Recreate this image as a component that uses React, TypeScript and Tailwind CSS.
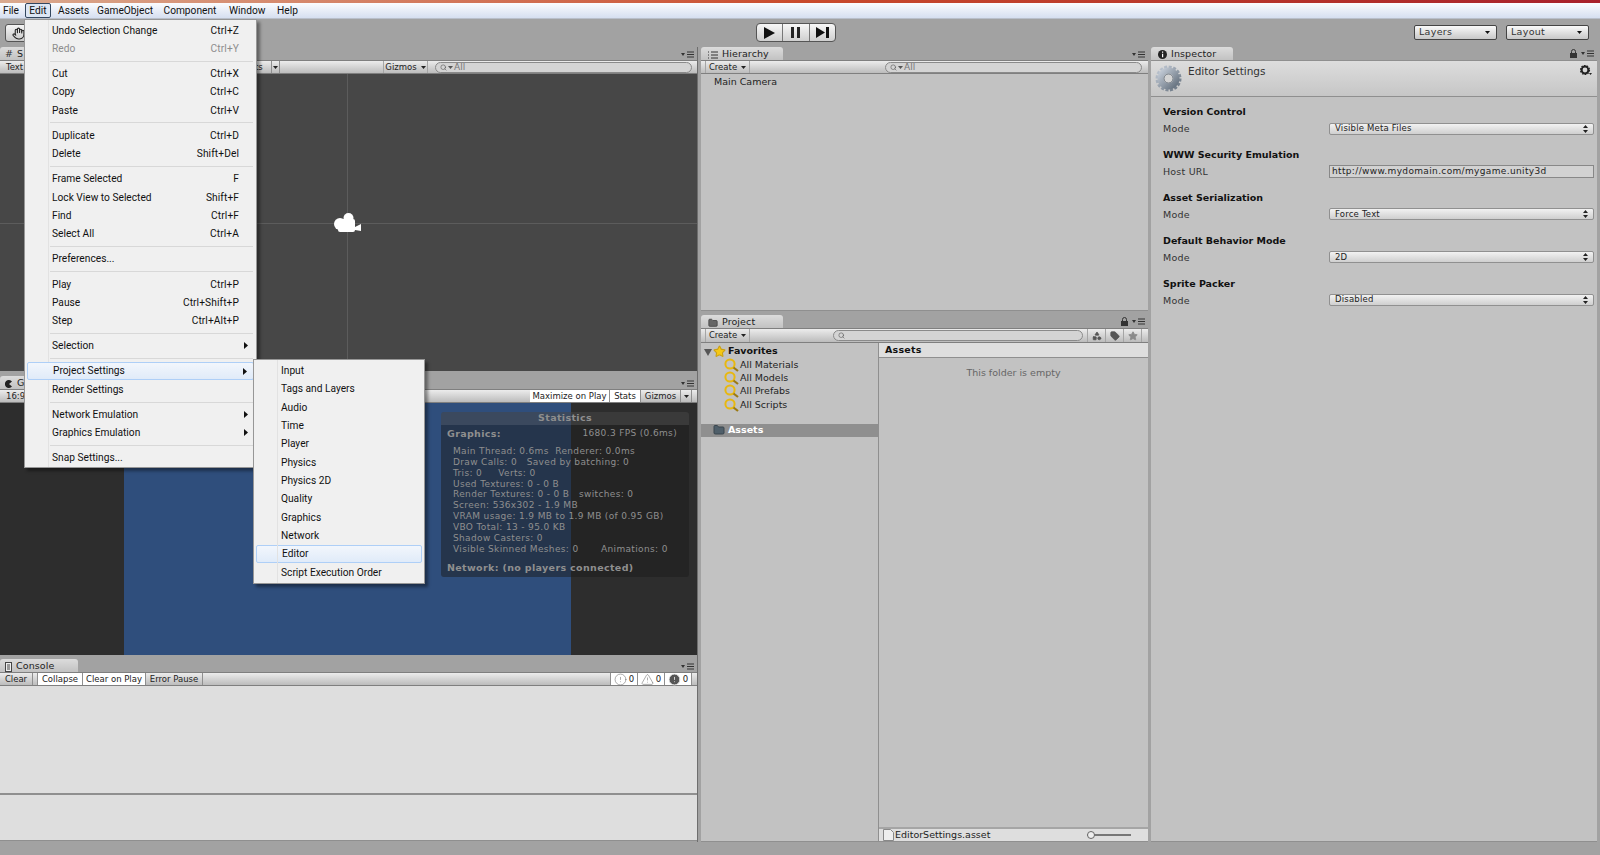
import { Hand, Search, Star, Tag, Folder, Shapes, TriangleAlert, CircleAlert } from "lucide-react";

const unity = "font-['DejaVu_Sans',sans-serif]";
const win = "font-['Roboto',sans-serif]";

const mainMenu: (null | { label: string; key?: string; sub?: boolean; off?: boolean; hot?: boolean })[] = [
  { label: "Undo Selection Change", key: "Ctrl+Z" },
  { label: "Redo", key: "Ctrl+Y", off: true },
  null,
  { label: "Cut", key: "Ctrl+X" },
  { label: "Copy", key: "Ctrl+C" },
  { label: "Paste", key: "Ctrl+V" },
  null,
  { label: "Duplicate", key: "Ctrl+D" },
  { label: "Delete", key: "Shift+Del" },
  null,
  { label: "Frame Selected", key: "F" },
  { label: "Lock View to Selected", key: "Shift+F" },
  { label: "Find", key: "Ctrl+F" },
  { label: "Select All", key: "Ctrl+A" },
  null,
  { label: "Preferences..." },
  null,
  { label: "Play", key: "Ctrl+P" },
  { label: "Pause", key: "Ctrl+Shift+P" },
  { label: "Step", key: "Ctrl+Alt+P" },
  null,
  { label: "Selection", sub: true },
  null,
  { label: "Project Settings", sub: true, hot: true },
  { label: "Render Settings" },
  null,
  { label: "Network Emulation", sub: true },
  { label: "Graphics Emulation", sub: true },
  null,
  { label: "Snap Settings..." },
];

const subMenu = ["Input", "Tags and Layers", "Audio", "Time", "Player", "Physics", "Physics 2D", "Quality", "Graphics", "Network", "Editor", "Script Execution Order"];

const settings = [
  { title: "Version Control", label: "Mode", value: "Visible Meta Files" },
  { title: "WWW Security Emulation", label: "Host URL", value: "http://www.mydomain.com/mygame.unity3d", input: true },
  { title: "Asset Serialization", label: "Mode", value: "Force Text" },
  { title: "Default Behavior Mode", label: "Mode", value: "2D" },
  { title: "Sprite Packer", label: "Mode", value: "Disabled" },
];

const stats = [
  "Main Thread: 0.6ms  Renderer: 0.0ms",
  "Draw Calls: 0   Saved by batching: 0",
  "Tris: 0     Verts: 0",
  "Used Textures: 0 - 0 B",
  "Render Textures: 0 - 0 B   switches: 0",
  "Screen: 536x302 - 1.9 MB",
  "VRAM usage: 1.9 MB to 1.9 MB (of 0.95 GB)",
  "VBO Total: 13 - 95.0 KB",
  "Shadow Casters: 0",
  "Visible Skinned Meshes: 0       Animations: 0",
];

const PanelMenu = () => (
  <svg width="13" height="7" viewBox="0 0 13 7" className="shrink-0">
    <path d="M0 2h4L2 5z" fill="#333" />
    <path d="M6 1h7M6 3.5h7M6 6h7" stroke="#333" strokeWidth="1" />
  </svg>
);

const LockIcon = () => (
  <svg width="7" height="9" viewBox="0 0 7 9" className="shrink-0">
    <path d="M1.5 4V2.5a2 2 0 0 1 4 0V4" fill="none" stroke="#333" />
    <rect x="0" y="4" width="7" height="5" fill="#333" />
  </svg>
);

const Caret = ({ color = "#222" }: { color?: string }) => (
  <svg width="5" height="3" viewBox="0 0 5 3" className="shrink-0">
    <path d="M0 0h5L2.5 3z" fill={color} />
  </svg>
);

const Arrow = () => (
  <svg width="4" height="7" viewBox="0 0 4 7" className="shrink-0">
    <path d="M0 0l4 3.5L0 7z" fill="#111" />
  </svg>
);

const Updown = () => (
  <svg width="5" height="8" viewBox="0 0 5 8" className="shrink-0">
    <path d="M2.5 0L5 3H0zM2.5 8L0 5h5z" fill="#222" />
  </svg>
);

const Magnifier = () => (
  <svg width="15" height="14" viewBox="0 0 15 14" className="shrink-0">
    <circle cx="6" cy="6" r="4.6" fill="none" stroke="#e8b810" strokeWidth="2" />
    <path d="M9.5 9.5L14 13" stroke="#9c7a12" strokeWidth="2.2" />
  </svg>
);

const Gear = () => (
  <svg width="27" height="27" viewBox="0 0 27 27" className="shrink-0">
    <defs>
      <linearGradient id="gear" x1="0" y1="0" x2="1" y2="1">
        <stop offset="0" stopColor="#c3cbd6" />
        <stop offset="1" stopColor="#66727f" />
      </linearGradient>
    </defs>
    <circle cx="13.5" cy="13.5" r="11.5" fill="none" stroke="url(#gear)" strokeWidth="3" strokeDasharray="3 1.5" />
    <circle cx="13.5" cy="13.5" r="8" fill="none" stroke="url(#gear)" strokeWidth="6" />
    <circle cx="13.5" cy="13.5" r="4.5" fill="#d4d4d4" stroke="#5e6873" strokeWidth="0.8" />
  </svg>
);

const SmallGear = () => (
  <svg width="12" height="11" viewBox="0 0 12 11" className="shrink-0">
    <circle cx="5" cy="5" r="3.4" fill="none" stroke="#222" strokeWidth="2" />
    <circle cx="5" cy="5" r="4.5" fill="none" stroke="#222" strokeWidth="1.2" strokeDasharray="1.6 1.2" />
    <path d="M9 8h3l-1.5 2z" fill="#222" />
  </svg>
);

const TabStrip = ({ children, h, left, menu, lock }: { children: React.ReactNode; h: string; left: string; menu?: boolean; lock?: boolean }) => (
  <div className={`${h} flex items-end justify-between shrink-0`}>
    <div className={`${left} h-[13px] pt-[2px] flex items-center gap-1 rounded-t-[3px] bg-gradient-to-b from-[#dcdcdc] to-[#c2c2c2] text-[9.5px] tracking-[0.1px] text-[#222] ${unity}`}>
      {children}
    </div>
    {menu && (
      <div className="flex items-center gap-[4px] pr-[3px] pb-[2px]">
        {lock && <LockIcon />}
        <PanelMenu />
      </div>
    )}
  </div>
);

const Bar = ({ children, h = "h-[14px]" }: { children: React.ReactNode; h?: string }) => (
  <div className={`${h} shrink-0 flex items-stretch whitespace-nowrap border-y border-[#7f7f7f] bg-gradient-to-b from-[#ececec] to-[#bcbcbc] text-[8.5px] text-[#222] ${unity}`}>
    {children}
  </div>
);

const SearchPill = ({ className, all = true }: { className: string; all?: boolean }) => (
  <div className={`${className} h-[11px] self-center flex items-center gap-px pl-1 rounded-full border border-[#8a8a8a] bg-[#d4d4d4] text-[9px] text-[#777]`}>
    <Search size={7} stroke="#555" />
    {all && <Caret color="#555" />}
    {all && <span className="leading-none">All</span>}
  </div>
);

const SceneView = () => (
  <div className="h-[297px] shrink-0 relative bg-[#474747] overflow-hidden">
    <div className="absolute left-[347px] top-0 bottom-0 w-px bg-[#5c5c5c]" />
    <div className="absolute left-0 right-0 top-[149px] h-px bg-[#5c5c5c]" />
    <svg width="28" height="20" viewBox="0 0 28 20" className="absolute left-[334px] top-[139px]">
      <circle cx="6" cy="11" r="6" fill="#fff" />
      <circle cx="14.5" cy="5" r="5" fill="#fff" />
      <rect x="4" y="6" width="17" height="13" rx="2" fill="#fff" />
      <path d="M21 14l6-3v7l-6-1z" fill="#fff" />
    </svg>
  </div>
);

const GameView = () => (
  <div className="h-[252px] shrink-0 relative flex bg-[#2d2d2d] overflow-hidden">
    <div className="w-[124px] shrink-0" />
    <div className="w-[447px] shrink-0 bg-[#2f4e7c]" />
    <div className={`absolute left-[441px] top-[9px] w-[248px] h-[165px] rounded-[3px] bg-[#1c1c1c]/50 text-[#8f8f8f] text-[9px] tracking-[0.35px] ${unity}`}>
      <div className="h-[13px] flex items-center justify-center rounded-t-[3px] bg-white/10 font-bold text-[#8e8e8e] text-[9.5px]">Statistics</div>
      <div className="flex justify-between pl-[6px] pr-[12px] mt-[3px] leading-[11px]">
        <span className="font-bold text-[9.5px]">Graphics:</span>
        <span>1680.3 FPS (0.6ms)</span>
      </div>
      <div className="pl-[12px] mt-[7px] whitespace-pre">
        {stats.map((line) => (
          <div key={line} className="h-[10.85px] leading-[11px]">{line}</div>
        ))}
      </div>
      <div className="pl-[6px] mt-[8px] font-bold text-[9.5px] leading-[11px]">Network: (no players connected)</div>
    </div>
  </div>
);

const ToolButton = ({ label, className, white }: { label: string; className: string; white?: boolean }) => (
  <div className={`${className} flex items-center justify-center border-r border-[#8f8f8f] ${white ? "bg-white" : ""}`}>{label}</div>
);

const LeftColumn = () => (
  <div className="w-[698px] shrink-0 flex flex-col border-r border-[#6e6e6e]">
    <TabStrip h="h-[13px]" left="w-[30px] pl-[5px]" menu>
      <span className="text-[#333]">#</span>
      <span>S</span>
    </TabStrip>
    <Bar>
      <div className="w-[30px] pl-[6px] flex items-center">Text</div>
      <div className="w-[225px]" />
      <div className="w-[17px] flex items-center border-r border-[#8f8f8f]">ts</div>
      <div className="w-[8px] flex items-center justify-center border-r border-[#8f8f8f]"><Caret /></div>
      <div className="w-[103px]" />
      <div className="w-[45px] flex items-center justify-center gap-1 border-x border-[#a5a5a5]">Gizmos <Caret /></div>
      <div className="w-[7px]" />
      <SearchPill className="w-[257px]" />
    </Bar>
    <SceneView />
    <TabStrip h="h-[18px]" left="w-[30px] pl-[5px]" menu>
      <svg width="8" height="8" viewBox="0 0 8 8"><path d="M7 1.5A4 4 0 1 0 7 6.5L4 4z" fill="#222" /></svg>
      <span>G</span>
    </TabStrip>
    <Bar>
      <div className="pl-[6px] flex items-center">16:9</div>
      <div className="flex-1" />
      <ToolButton label="Maximize on Play" className="w-[80px]" white />
      <ToolButton label="Stats" className="w-[31px]" white />
      <ToolButton label="Gizmos" className="w-[40px]" />
      <div className="w-[11px] flex items-center justify-center border-r border-[#8f8f8f]"><Caret /></div>
      <div className="w-[5px]" />
    </Bar>
    <GameView />
    <TabStrip h="h-[17px]" left="w-[78px] pl-[5px]" menu>
      <svg width="7" height="10" viewBox="0 0 7 10"><rect x=".5" y=".5" width="6" height="9" fill="#eee" stroke="#444" /><path d="M2 3h3M2 5h3M2 7h3" stroke="#444" /></svg>
      <span>Console</span>
    </TabStrip>
    <Bar>
      <ToolButton label="Clear" className="w-[33px]" />
      <div className="w-[5px] border-r border-[#8f8f8f]" />
      <ToolButton label="Collapse" className="w-[45px]" white />
      <ToolButton label="Clear on Play" className="w-[63px]" white />
      <ToolButton label="Error Pause" className="w-[57px]" />
      <div className="flex-1" />
      <div className="w-[28px] flex items-center justify-center gap-[2px] bg-white border-x border-[#8f8f8f]"><CircleAlert size={13} strokeWidth={1} stroke="#666" /> 0</div>
      <div className="w-[27px] flex items-center justify-center gap-[2px] bg-white border-r border-[#8f8f8f]"><TriangleAlert size={13} strokeWidth={1} stroke="#666" /> 0</div>
      <div className="w-[27px] flex items-center justify-center gap-[2px] bg-white border-r border-[#8f8f8f]"><CircleAlert size={13} strokeWidth={1.5} fill="#555" stroke="#eee" /> 0</div>
      <div className="w-[5px]" />
    </Bar>
    <div className="h-[109px] shrink-0 bg-[#dedede] border-b-2 border-[#8f8f8f]" />
    <div className="h-[46px] shrink-0 bg-[#dedede] border-b border-[#8f8f8f]" />
  </div>
);

const MiddleColumn = () => (
  <div className={`w-[447px] shrink-0 flex flex-col ${unity}`}>
    <TabStrip h="h-[13px]" left="w-[82px] pl-[7px]" menu>
      <svg width="10" height="8" viewBox="0 0 10 8"><path d="M0 1h1M0 4h1M0 7h1M3 1h7M3 4h7M3 7h7" stroke="#333" /></svg>
      <span>Hierarchy</span>
    </TabStrip>
    <Bar>
      <div className="w-[5px] border-r border-[#a5a5a5]" />
      <div className="w-[44px] flex items-center justify-center gap-1 border-r border-[#a5a5a5]">Create <Caret /></div>
      <div className="w-[135px]" />
      <SearchPill className="w-[257px]" />
    </Bar>
    <div className="h-[237px] shrink-0 bg-[#c2c2c2] border-b border-[#8f8f8f] pl-[13px] pt-[1px] text-[9.5px] text-[#222]">Main Camera</div>
    <TabStrip h="h-[17px]" left="w-[82px] pl-[7px]" menu lock>
      <Folder size={10} fill="#666" stroke="#444" />
      <span>Project</span>
    </TabStrip>
    <Bar h="h-[15px]">
      <div className="w-[5px] border-r border-[#a5a5a5]" />
      <div className="w-[44px] flex items-center justify-center gap-1 border-r border-[#a5a5a5]">Create <Caret /></div>
      <div className="w-[83px]" />
      <SearchPill className="w-[250px]" all={false} />
      <div className="w-[5px] border-r border-[#a5a5a5]" />
      <div className="w-[18px] flex items-center justify-center border-r border-[#a5a5a5]"><Shapes size={10} fill="#555" stroke="#555" /></div>
      <div className="w-[18px] flex items-center justify-center border-r border-[#a5a5a5]"><Tag size={10} fill="#555" stroke="#555" /></div>
      <div className="w-[18px] flex items-center justify-center border-r border-[#a5a5a5]"><Star size={10} fill="#8a8a8a" stroke="#8a8a8a" /></div>
    </Bar>
    <div className="flex-1 min-h-0 flex bg-[#c2c2c2] border-b border-[#8f8f8f]">
      <div className="w-[178px] shrink-0 border-r border-[#8f8f8f] text-[9.5px] text-[#222] pt-[2px]">
        <div className="h-[13px] flex items-center pl-[3px] gap-[1px] font-bold text-[#111]">
          <svg width="8" height="8" viewBox="0 0 8 8" className="shrink-0"><path d="M0 1h8L4 8z" fill="#555" /></svg>
          <Star size={13} fill="#f5c814" stroke="#caa014" />
          <span className="ml-[1px]">Favorites</span>
        </div>
        {["All Materials", "All Models", "All Prefabs", "All Scripts"].map((name) => (
          <div key={name} className="h-[13.4px] flex items-center gap-[1px] pl-[23px]">
            <Magnifier />
            <span>{name}</span>
          </div>
        ))}
        <div className="mt-[12px] h-[13px] flex items-center gap-[3px] pl-[12px] bg-[#8f8f8f] font-bold text-white">
          <Folder size={12} fill="#4f5f6a" stroke="#3a464e" />
          <span>Assets</span>
        </div>
      </div>
      <div className="flex-1 min-w-0 flex flex-col">
        <div className="h-[15px] pt-[1px] shrink-0 flex items-center pl-[6px] bg-[#dedede] border-b border-[#8f8f8f] font-bold text-[9.5px] tracking-[0.2px] text-[#111]">Assets</div>
        <div className="pt-[8px] text-center text-[9.5px] text-[#666]">This folder is empty</div>
        <div className="flex-1" />
        <div className="h-[14px] shrink-0 flex items-center justify-between pl-[4px] pr-[17px] bg-[#dedede] border-t-2 border-[#a5a5a5] text-[9.5px] text-[#222]">
          <div className="flex items-center gap-[1px]">
            <svg width="11" height="12" viewBox="0 0 11 12"><path d="M.5.5h7l3 3v8H.5z" fill="#eee" stroke="#888" /></svg>
            <span>EditorSettings.asset</span>
          </div>
          <div className="relative w-[44px] h-[8px] flex items-center">
            <div className="w-full h-[2px] bg-[#777]" />
            <div className="absolute left-0 w-[8px] h-[8px] rounded-full border border-[#666] bg-[#eee]" />
          </div>
        </div>
      </div>
    </div>
  </div>
);

const InspectorColumn = () => (
  <div className={`w-[446px] shrink-0 flex flex-col ${unity}`}>
    <TabStrip h="h-[13px]" left="w-[82px] pl-[7px]" menu lock>
      <svg width="9" height="9" viewBox="0 0 9 9"><circle cx="4.5" cy="4.5" r="4.5" fill="#222" /><path d="M4 1.5h1.2v1.2H4zM4 3.7h1.2v3.6H4z" fill="#fff" /></svg>
      <span>Inspector</span>
    </TabStrip>
    <div className="h-[37px] shrink-0 flex border-y border-[#8f8f8f] bg-gradient-to-b from-[#dddddd] to-[#c6c6c6] relative">
      <div className="mt-[4px] ml-[4px]"><Gear /></div>
      <span className="ml-[6px] text-[10.5px] text-[#333] leading-[20px]">Editor Settings</span>
      <div className="absolute right-[5px] top-[4px]"><SmallGear /></div>
    </div>
    <div className="flex-1 min-h-0 bg-[#c2c2c2] border-b border-[#8f8f8f] pl-[12px] pr-[3px] pt-[9px]">
      {settings.map((row) => (
        <div key={row.title} className="h-[42.8px]">
          <div className="h-[13px] flex items-center font-bold text-[9.5px] text-[#111]">{row.title}</div>
          <div className="h-[21px] flex items-center justify-between text-[9.5px] tracking-[0.2px] text-[#333]">
            <span>{row.label}</span>
            {row.input ? (
              <div className="w-[265px] h-[13px] -mt-[2px] flex items-center pl-[2px] border border-[#888] bg-[#d2d2d2] text-[9px] tracking-[0.35px] text-[#222]">{row.value}</div>
            ) : (
              <div className="w-[265px] h-[12px] -mt-[2px] flex items-center justify-between pl-[5px] pr-[5px] rounded-[2px] border border-[#909090] bg-gradient-to-b from-[#f2f2f2] to-[#cfcfcf] text-[8.5px] text-[#222]">
                <span>{row.value}</span>
                <Updown />
              </div>
            )}
          </div>
        </div>
      ))}
    </div>
  </div>
);

const Toolbar = () => (
  <div className="h-[28px] shrink-0 flex items-start pt-[5px] relative">
    <div className="ml-[5px] w-[48px] h-[18px] flex items-center pl-[6px] rounded-[3px] border border-[#555] bg-gradient-to-b from-[#f5f5f5] to-[#c9c9c9]">
      <Hand size={13} stroke="#222" />
    </div>
    <div className="ml-[703px] mt-[-1px] w-[80px] h-[19px] flex rounded-[4px] border border-[#555] bg-gradient-to-b from-[#f7f7f7] to-[#cfcfcf]">
      <div className="flex-1 flex items-center justify-center border-r border-[#777]">
        <svg width="13" height="12" viewBox="0 0 13 12"><path d="M1 0l11 6L1 12z" fill="#111" /></svg>
      </div>
      <div className="flex-1 flex items-center justify-center border-r border-[#777]">
        <svg width="9" height="11" viewBox="0 0 9 11"><path d="M0 0h3v11H0zM6 0h3v11H6z" fill="#222" /></svg>
      </div>
      <div className="flex-1 flex items-center justify-center">
        <svg width="13" height="11" viewBox="0 0 13 11"><path d="M0 0l9 5.5L0 11zM10 0h3v11h-3z" fill="#111" /></svg>
      </div>
    </div>
    <div className="flex-1" />
    <div className={`flex gap-[9px] pr-[11px] mt-[1px] text-[9.5px] tracking-[0.3px] text-[#333] ${unity}`}>
      {["Layers", "Layout"].map((name) => (
        <div key={name} className="w-[83px] h-[15px] flex items-center justify-between pl-[4px] pr-[6px] rounded-[2px] border border-[#444] bg-gradient-to-b from-[#fafafa] to-[#c8c8c8]">
          <span>{name}</span>
          <Caret color="#111" />
        </div>
      ))}
    </div>
  </div>
);

const EditMenu = () => (
  <div className={`absolute left-[24px] top-[19px] w-[233px] h-[449px] pt-[1px] pl-[2px] pr-[2px] bg-[#f0f0f0] border border-[#979797] shadow-[3px_3px_3px_rgba(0,0,0,0.4)] text-[10.2px] text-[#111] ${win}`}>
    <div className="absolute left-[23px] top-0 bottom-0 w-px bg-[#e2e2e2]" />
    {mainMenu.map((item, i) =>
      item === null ? (
        <div key={i} className="h-[6.9px] flex items-center pl-[23px] pr-[1px]">
          <div className="w-full h-px bg-[#d8d8d8]" />
        </div>
      ) : (
        <div key={item.label} className={`relative h-[18.3px] flex items-center justify-between pl-[25px] pr-[15px] ${item.hot ? "rounded-[2px] border border-[#aecff7] bg-gradient-to-b from-[#f2f6fc] to-[#e0ebf9]" : ""} ${item.off ? "text-[#8d8d8d]" : ""}`}>
          <span>{item.label}</span>
          {item.key && <span className="tracking-[0.1px]">{item.key}</span>}
          {item.sub && <span className="absolute right-[6px]"><Arrow /></span>}
        </div>
      )
    )}
  </div>
);

const ProjectSubMenu = () => (
  <div className={`absolute left-[253px] top-[359px] w-[172px] h-[225px] pt-[1.5px] px-[2px] bg-[#f0f0f0] border border-[#979797] shadow-[3px_3px_3px_rgba(0,0,0,0.4)] text-[10.2px] text-[#111] ${win}`}>
    <div className="absolute left-[23px] top-0 bottom-0 w-px bg-[#e2e2e2]" />
    {subMenu.map((name) => (
      <div key={name} className={`h-[18.35px] flex items-center pl-[25px] ${name === "Editor" ? "rounded-[2px] border border-[#aecff7] bg-gradient-to-b from-[#f2f6fc] to-[#e0ebf9]" : ""}`}>{name}</div>
    ))}
  </div>
);

const MenuBar = () => (
  <div className={`h-[16px] shrink-0 flex items-center bg-gradient-to-b from-[#fbfcfe] to-[#d6dff0] border-b border-[#b9bfca] text-[10.2px] text-[#111] ${win}`}>
    <span className="w-[25px] pl-[3px]">File</span>
    <span className="w-[26px] h-[15px] flex items-center justify-center rounded-[2px] border border-[#33475f] bg-[#dce6f4]">Edit</span>
    <span className="w-[46px] pl-[7px]">Assets</span>
    <span className="w-[66.5px]">GameObject</span>
    <span className="w-[65.5px]">Component</span>
    <span className="w-[48px]">Window</span>
    <span>Help</span>
  </div>
);

export default function App() {
  return (
    <div className="relative w-[1600px] h-[855px] flex flex-col bg-[#a2a2a2] overflow-hidden">
      <div className="h-[3px] shrink-0 bg-gradient-to-r from-[#d9a98f] via-[#c94a2c] to-[#a8202a]" />
      <MenuBar />
      <Toolbar />
      <div className="h-[795px] shrink-0 flex gap-[3px]">
        <LeftColumn />
        <MiddleColumn />
        <InspectorColumn />
      </div>
      <EditMenu />
      <ProjectSubMenu />
    </div>
  );
}
